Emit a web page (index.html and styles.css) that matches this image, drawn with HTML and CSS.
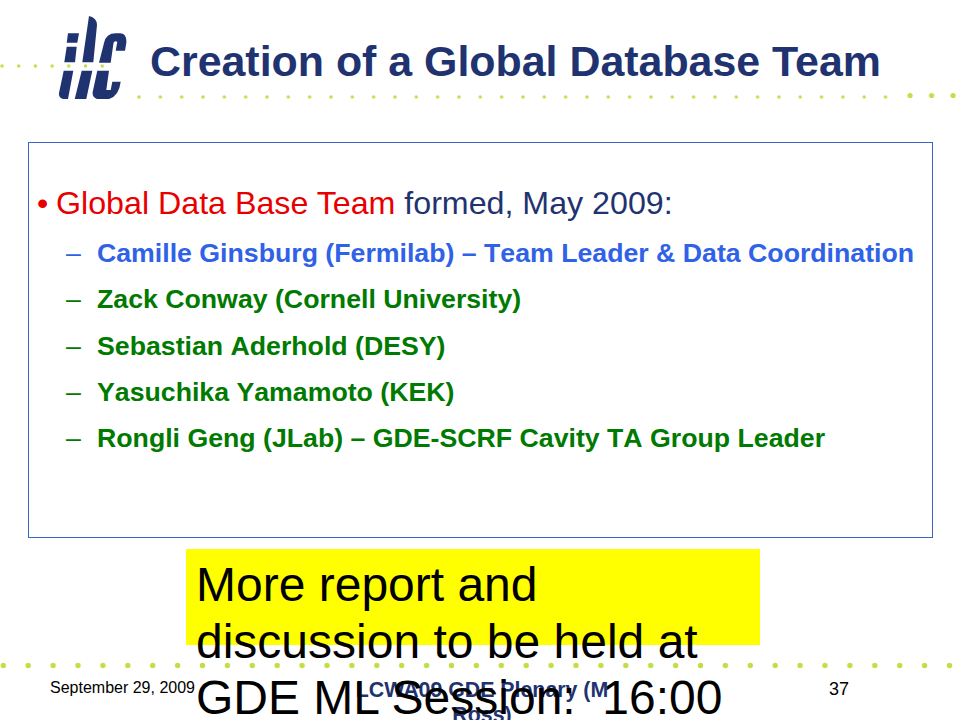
FILE: index.html
```html
<!DOCTYPE html>
<html lang="en">
<head>
<meta charset="utf-8">
<title>Creation of a Global Database Team</title>
<link rel="stylesheet" href="styles.css">
</head>
<body>
<main class="slide">
  <svg class="dots" width="960" height="720" viewBox="0 0 960 720" aria-hidden="true">
    <defs>
      <pattern id="dot-top" patternUnits="userSpaceOnUse" x="-6.35" y="62" width="16.7" height="8"><circle cx="8.35" cy="4" r="1.7"/></pattern>
      <pattern id="dot-mid" patternUnits="userSpaceOnUse" x="128.33" y="93" width="21.33" height="8"><circle cx="10.67" cy="4" r="1.7"/></pattern>
      <pattern id="dot-end" patternUnits="userSpaceOnUse" x="899.33" y="90" width="21.5" height="11"><circle cx="10.75" cy="5.5" r="2.6"/></pattern>
      <pattern id="dot-low" patternUnits="userSpaceOnUse" x="-9.15" y="660" width="24.9" height="11"><circle cx="12.45" cy="5.5" r="2.7"/></pattern>
    </defs>
    <g>
      <rect x="0" y="62" width="110" height="8" fill="url(#dot-top)"/>
      <rect x="128" y="93" width="768" height="8" fill="url(#dot-mid)"/>
      <rect x="899" y="90" width="61" height="11" fill="url(#dot-end)"/>
      <rect x="0" y="660" width="960" height="11" fill="url(#dot-low)"/>
    </g>
  </svg>

  <header class="head">
    <svg class="logo" width="72" height="88" viewBox="60 14 72 88" aria-label="ilc logo">
      <path class="logo-mark" d="M69 33.3H80L78.3 42.7H67.7ZM67.7 46.7H77.7L76 62.3H65.3ZM64.7 70.7H74.3L69 99H64Q59.5 98 60 93ZM90 16Q98 18 98 25L94.3 62.3H83.3ZM82.7 70.7H93.3L87.3 99H75.7ZM100 62.7L105 43Q107 33.3 116.7 33.3H121Q128 33.5 127.3 43L126 50.7H116.7L118.3 41.7Q115 40.5 114.5 43L111.7 62.7ZM98.3 70.7H110L107.3 90H111.7L113.3 81.7H121.7Q120 96 110 99H98Q93 97 93.7 92Z"/>
    </svg>
    <h1 class="title">Creation of a Global Database Team</h1>
  </header>

  <section class="box">
    <p class="lead"><span class="bullet">•</span><span><span class="red">Global Data Base Team</span> formed, May 2009:</span></p>
    <ul class="people">
      <li class="person blue"><span class="dash">–</span>Camille Ginsburg (Fermilab) – Team Leader &amp; Data Coordination</li>
      <li class="person green"><span class="dash">–</span>Zack Conway (Cornell University)</li>
      <li class="person green"><span class="dash">–</span>Sebastian Aderhold (DESY)</li>
      <li class="person green"><span class="dash">–</span>Yasuchika Yamamoto (KEK)</li>
      <li class="person green"><span class="dash">–</span>Rongli Geng (JLab) – GDE-SCRF Cavity TA Group Leader</li>
    </ul>
  </section>

  <footer class="foot">
    <div class="date">September 29, 2009</div>
    <div class="event">LCWA09 GDE Plenary (M Ross)</div>
    <div class="page">37</div>
  </footer>

  <aside class="callout">More report and discussion to be held at GDE ML Session:&nbsp; 16:00</aside>
</main>
</body>
</html>
```
FILE: styles.css
```css
html, body { margin: 0; padding: 0; background: #fff; }
.slide { position: relative; width: 960px; height: 720px; overflow: hidden; font-family: "Liberation Sans", Arial, sans-serif; }
.dots { position: absolute; left: 0; top: 0; }
.dots circle { fill: #c3de44; }
.head { display: flex; align-items: flex-start; height: 142px; padding-left: 59px; box-sizing: border-box; position: relative; }
.logo { margin-top: 14px; flex: none; }
.logo-mark { fill: #1f3371; }
.title { margin: 36px 0 0 19px; font-size: 42.9px; line-height: 50px; font-weight: 700; color: #1f3371; white-space: nowrap; }
.box { position: relative; box-sizing: border-box; width: 905px; height: 396px; margin-left: 28px; border: 1px solid #3f63c4; padding: 41px 0 0 8px; }
.lead { margin: 0; font-size: 32.2px; line-height: 38px; color: #1f3371; display: flex; align-items: baseline; white-space: pre; }
.bullet { color: #e80000; width: 19px; }
.red { color: #e80000; }
.people { list-style: none; margin: 8px 0 0; padding: 0 0 0 29px; }
.person { display: flex; font-size: 26.7px; line-height: 46.25px; font-weight: 700; white-space: nowrap; font-kerning: none; }
.blue { color: #2f62e6; }
.green { color: #007a00; }
.dash { width: 31px; font-weight: 400; }
.foot { position: relative; display: grid; grid-template-columns: 352px 260px 1fr; margin-top: 140px; }
.date { font-size: 16px; line-height: 18px; padding-top: 1px; padding-left: 50px; color: #000; }
.event { font-size: 21.33px; line-height: 25px; font-weight: 700; color: #1f3371; text-align: center; }
.page { font-size: 18px; line-height: 20px; padding-top: 1px; padding-left: 217px; color: #000; }
.callout { position: absolute; left: 186px; top: 549px; width: 574px; height: 96px; box-sizing: border-box; padding: 8px 10px 0; background: #ffff00; color: #000; font-size: 48px; line-height: 56.5px; }
```
